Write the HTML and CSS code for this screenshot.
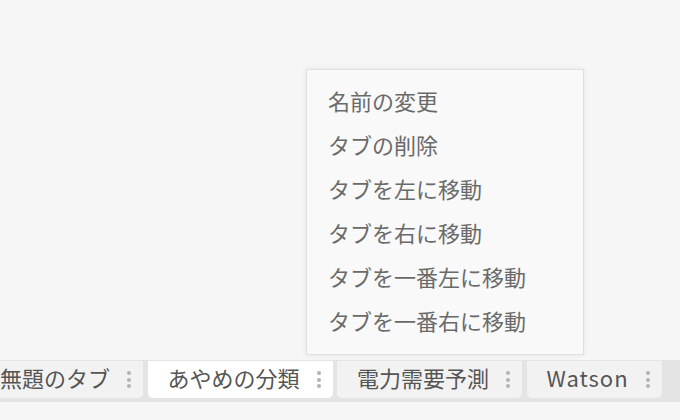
FILE: index.html
```html
<!DOCTYPE html>
<html lang="ja">
<head>
<meta charset="utf-8">
<link rel="stylesheet" href="styles.css">
</head>
<body>
<div class="page">
  <div class="canvas"></div>
  <div class="tabbar">
    <div class="tab"><span class="label">無題のタブ</span><span class="kebab"><i></i><i></i><i></i></span></div>
    <div class="tab active"><span class="label">あやめの分類</span><span class="kebab"><i></i><i></i><i></i></span></div>
    <div class="tab"><span class="label">電力需要予測</span><span class="kebab"><i></i><i></i><i></i></span></div>
    <div class="tab"><span class="label latin">Watson</span><span class="kebab"><i></i><i></i><i></i></span></div>
  </div>
  <div class="footer"></div>
  <ul class="menu">
    <li>名前の変更</li>
    <li>タブの削除</li>
    <li>タブを左に移動</li>
    <li>タブを右に移動</li>
    <li>タブを一番左に移動</li>
    <li>タブを一番右に移動</li>
  </ul>
</div>
</body>
</html>
```
FILE: styles.css
```css
html, body {
  margin: 0;
  padding: 0;
  background: #f6f6f6;
  font-family: "Noto Sans CJK JP", "Noto Sans", sans-serif;
}
.page {
  position: relative;
  width: 680px;
  height: 420px;
  overflow: hidden;
  display: flex;
  flex-direction: column;
}
.canvas {
  height: 360px;
  flex: none;
}
.tabbar {
  height: 42px;
  flex: none;
  background: #e4e4e4;
  display: flex;
  align-items: flex-start;
  gap: 4.5px;
  padding-top: 1px;
  box-sizing: border-box;
  margin-left: -20px;
}
.tab {
  height: 37px;
  display: flex;
  align-items: center;
  gap: 17px;
  padding: 0 12px 0 20px;
  background: #f2f2f2;
  border-radius: 0 0 5px 5px;
  color: #555;
  font-size: 22px;
  white-space: nowrap;
}
.tab .label {
  line-height: 33px;
  padding-bottom: 4px;
}
.tab .label.latin {
  letter-spacing: 1px;
}
.tab.active {
  background: #ffffff;
}
.kebab {
  display: flex;
  flex-direction: column;
  gap: 2.5px;
  width: 4px;
}
.kebab i {
  display: block;
  width: 4px;
  height: 4px;
  border-radius: 50%;
  background: #b3b3b3;
}
.footer {
  flex: 1;
}
.menu {
  position: absolute;
  left: 306px;
  top: 69px;
  width: 278px;
  height: 286px;
  box-sizing: border-box;
  margin: 0;
  padding: 8px 0 0 0;
  list-style: none;
  background: #f9f9f9;
  border: 1px solid #e0e0e0;
  box-shadow: 0 0 6px rgba(0, 0, 0, 0.07);
}
.menu li {
  height: 44px;
  line-height: 44px;
  padding-left: 21px;
  font-size: 22px;
  color: #6a6a6a;
  white-space: nowrap;
}
```
